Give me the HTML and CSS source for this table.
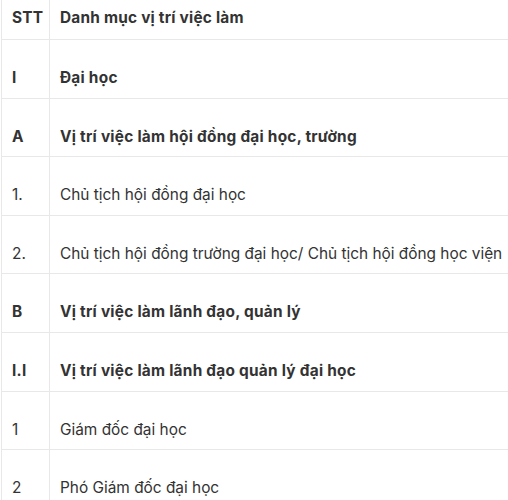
FILE: index.html
```html
<!DOCTYPE html>
<html lang="vi">
<head>
<meta charset="utf-8">
<link rel="stylesheet" href="styles.css">
</head>
<body>
<table class="jobs">
  <thead>
    <tr><th class="stt">STT</th><th class="name">Danh mục vị trí việc làm</th></tr>
  </thead>
  <tbody>
    <tr class="b"><td class="stt">I</td><td class="name">Đại học</td></tr>
    <tr class="b"><td class="stt">A</td><td class="name">Vị trí việc làm hội đồng đại học, trường</td></tr>
    <tr><td class="stt">1.</td><td class="name">Chủ tịch hội đồng đại học</td></tr>
    <tr><td class="stt">2.</td><td class="name">Chủ tịch hội đồng trường đại học/ Chủ tịch hội đồng học viện</td></tr>
    <tr class="b"><td class="stt">B</td><td class="name">Vị trí việc làm lãnh đạo, quản lý</td></tr>
    <tr class="b"><td class="stt">I.I</td><td class="name">Vị trí việc làm lãnh đạo quản lý đại học</td></tr>
    <tr><td class="stt">1</td><td class="name">Giám đốc đại học</td></tr>
    <tr><td class="stt">2</td><td class="name">Phó Giám đốc đại học</td></tr>
  </tbody>
</table>
</body>
</html>
```
FILE: styles.css
```css
html, body {
  margin: 0;
  padding: 0;
  background: #fff;
}
body {
  font-family: Inter, Roboto, "Noto Sans", sans-serif;
  font-size: 15.4px;
  color: #333;
  overflow: hidden;
}
.jobs {
  margin-left: 1px;
  border-collapse: collapse;
  width: 507px;
  border-left: 1px solid #e8e8e8;
}
.jobs th, .jobs td {
  text-align: left;
  vertical-align: bottom;
  line-height: 21px;
  white-space: nowrap;
}
.jobs th {
  font-weight: 700;
  letter-spacing: 0.22px;
  padding: 7px 0 11px;
  border-bottom: 1px solid #e8e8e8;
}
.jobs td {
  padding: 27px 0 9.6px;
  border-bottom: 1px solid #e8e8e8;
}
.jobs .stt {
  width: 37px;
  padding-left: 10px;
  border-right: 1px solid #e8e8e8;
}
.jobs .name {
  padding-left: 10px;
}
.jobs tr.b td {
  font-weight: 700;
  letter-spacing: 0.25px;
}
```
